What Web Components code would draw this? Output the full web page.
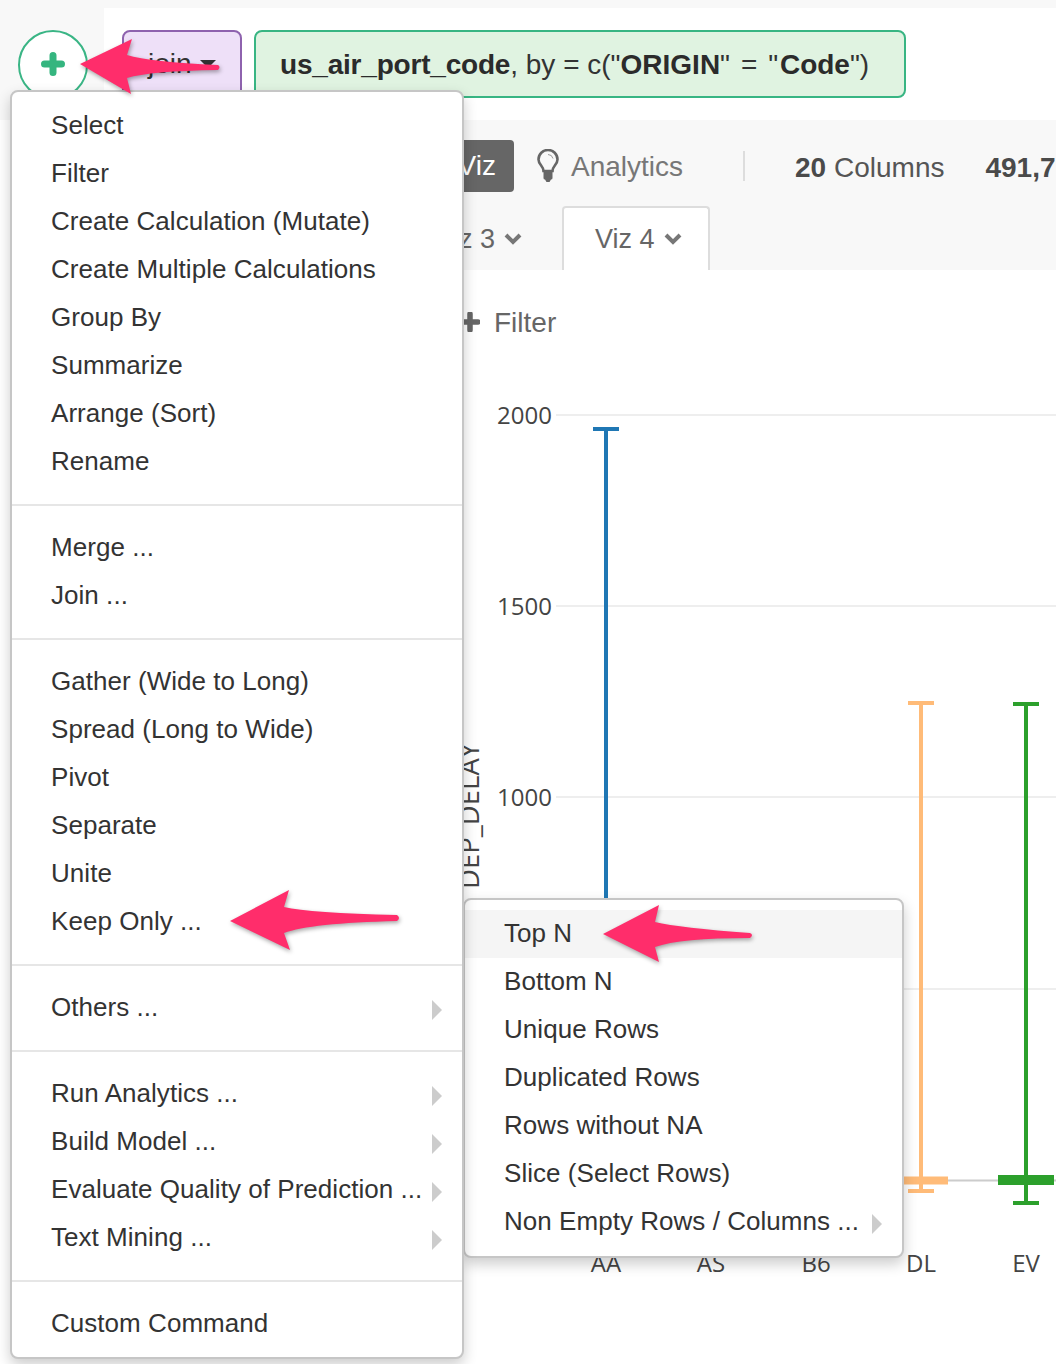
<!DOCTYPE html>
<html>
<head>
<meta charset="utf-8">
<title>Exploratory</title>
<style>
  html, body { margin: 0; padding: 0; background: #fff; }
  body { font-family: "Liberation Sans", Arial, sans-serif; color: #333; overflow: hidden; }
</style>
</head>
<body>
<app-page>
  <step-bar slot="steps"></step-bar>
  <view-toolbar slot="toolbar"></view-toolbar>
  <filter-row slot="filter"></filter-row>
  <box-chart slot="chart"></box-chart>

  <drop-menu slot="overlay" class="main">
    <menu-item>Select</menu-item>
    <menu-item>Filter</menu-item>
    <menu-item>Create Calculation (Mutate)</menu-item>
    <menu-item>Create Multiple Calculations</menu-item>
    <menu-item>Group By</menu-item>
    <menu-item>Summarize</menu-item>
    <menu-item>Arrange (Sort)</menu-item>
    <menu-item>Rename</menu-item>
    <menu-divider></menu-divider>
    <menu-item>Merge ...</menu-item>
    <menu-item>Join ...</menu-item>
    <menu-divider></menu-divider>
    <menu-item>Gather (Wide to Long)</menu-item>
    <menu-item>Spread (Long to Wide)</menu-item>
    <menu-item>Pivot</menu-item>
    <menu-item>Separate</menu-item>
    <menu-item>Unite</menu-item>
    <menu-item>Keep Only ...</menu-item>
    <menu-divider></menu-divider>
    <menu-item sub>Others ...</menu-item>
    <menu-divider></menu-divider>
    <menu-item sub>Run Analytics ...</menu-item>
    <menu-item sub>Build Model ...</menu-item>
    <menu-item sub>Evaluate Quality of Prediction ...</menu-item>
    <menu-item sub>Text Mining ...</menu-item>
    <menu-divider></menu-divider>
    <menu-item>Custom Command</menu-item>
  </drop-menu>

  <drop-menu slot="overlay" class="sub">
    <menu-item active>Top N</menu-item>
    <menu-item>Bottom N</menu-item>
    <menu-item>Unique Rows</menu-item>
    <menu-item>Duplicated Rows</menu-item>
    <menu-item>Rows without NA</menu-item>
    <menu-item>Slice (Select Rows)</menu-item>
    <menu-item sub>Non Empty Rows / Columns ...</menu-item>
  </drop-menu>

  <pink-arrows slot="overlay"></pink-arrows>
</app-page>

<script>
class AppPage extends HTMLElement {
  constructor() {
    super();
    this.shadowDOM = this.attachShadow({ mode: "open" });
  }
  connectedCallback() {
    this.shadowDOM.innerHTML = `
<style>
:host {
  display: grid;
  grid-template-columns: 104px 1fr;
  position: relative;
  width: 1056px;
  height: 1364px;
  overflow: hidden;
  background: #fff;
}
.rail {
  background: #f8f8f8;
  height: 120px;
  padding: 30px 0 0 18px;
  box-sizing: border-box;
}
.plus {
  width: 70px;
  height: 70px;
  box-sizing: border-box;
  border: 2px solid #3ab585;
  border-radius: 50%;
  background: #fff;
  display: flex;
  align-items: center;
  justify-content: center;
}
.plus svg { margin-bottom: 3px; }
.main {
  min-width: 0;
  display: flex;
  flex-direction: column;
}
.top-strip { height: 8px; background: #f8f8f8; }
</style>
<div class="rail">
  <div class="plus">
    <svg width="24" height="24" viewBox="0 0 24 24"><path d="M12 3.500v17M3.500 12h17" stroke="#35b57f" stroke-width="7" stroke-linecap="round" fill="none"/></svg>
  </div>
</div>
<div class="main">
  <div class="top-strip"></div>
  <slot name="steps"></slot>
  <slot name="toolbar"></slot>
  <slot name="filter"></slot>
  <slot name="chart"></slot>
</div>
<slot name="overlay"></slot>`;
  }
}

class StepBar extends HTMLElement {
  constructor() {
    super();
    this.shadowDOM = this.attachShadow({ mode: "open" });
  }
  connectedCallback() {
    this.shadowDOM.innerHTML = `
<style>
:host {
  display: flex;
  height: 112px;
  box-sizing: border-box;
  padding: 22px 0 0 18px;
  gap: 12px;
  background: #fff;
  font-size: 28px;
  color: #333;
}
.join, .code {
  height: 68px;
  box-sizing: border-box;
  display: flex;
  align-items: center;
  border-radius: 8px;
  border-style: solid;
  border-width: 2px;
}
.join {
  width: 120px;
  padding-left: 24px;
  gap: 8px;
  background: #eee0f8;
  border-color: #8e62ae;
}
.caret {
  width: 0;
  height: 0;
  border-left: 8px solid transparent;
  border-right: 8px solid transparent;
  border-top: 8px solid #333;
}
.code {
  width: 652px;
  padding: 2px 0 0 24px;
  background: #e0f3e1;
  border-color: #38b583;
  white-space: pre;
}
b { color: #2b2b2b; }
.first { letter-spacing: -.2px; }
.eq { letter-spacing: 1.6px; }
</style>
<div class="join"><span>join</span><span class="caret"></span></div>
<div class="code"><span><b class="first">us_air_port_code</b>, by = c("<b>ORIGIN</b><span class="eq">" = "</span><b>Code</b>")</span></div>`;
  }
}

class ViewToolbar extends HTMLElement {
  constructor() {
    super();
    this.shadowDOM = this.attachShadow({ mode: "open" });
  }
  connectedCallback() {
    const chevron = `<svg class="chev" width="18" height="14" viewBox="0 0 18 14"><path d="M2 3l7 7 7-7" stroke="#777" stroke-width="4" fill="none"/></svg>`;
    this.shadowDOM.innerHTML = `
<style>
:host {
  display: flex;
  flex-direction: column;
  height: 150px;
  box-sizing: border-box;
  padding-top: 20px;
  background: #f8f8f8;
  overflow: hidden;
  font-size: 28px;
  white-space: nowrap;
}
.row1 {
  display: flex;
  align-items: center;
  height: 52px;
  padding-left: 310px;
  color: #777;
}
.viz {
  height: 52px;
  width: 100px;
  flex: none;
  box-sizing: border-box;
  padding-right: 18px;
  display: flex;
  align-items: center;
  justify-content: flex-end;
  background: #666;
  color: #fff;
  border-radius: 4px;
  margin-right: 22px;
}
.bulb { margin-right: 11px; flex: none; }
.label { margin-top: 2px; }
.sep { width: 2px; height: 30px; background: #ddd; margin: 0 50px 0 60px; flex: none; }
.count { color: #555; margin-right: 41px; margin-top: 3px; flex: none; }
.count b { color: #4a4a4a; }
.row2 {
  display: flex;
  align-items: flex-end;
  height: 64px;
  margin-top: 14px;
  padding-left: 298px;
  gap: 12px;
  color: #666;
  font-size: 27px;
}
.tab {
  height: 64px;
  box-sizing: border-box;
  display: flex;
  align-items: center;
  gap: 9px;
  padding: 0 26px 0 31px;
  border: 2px solid transparent;
  border-bottom: 0;
  border-radius: 4px 4px 0 0;
}
.tab.on { background: #fff; border-color: #ddd; width: 148px; }
.tab.off { width: 148px; justify-content: flex-end; }
</style>
<div class="row1">
  <div class="viz">Viz</div>
  <svg class="bulb" width="24" height="34" viewBox="0 0 24 34">
    <path d="M7.500 22C7.500 17 2.500 15.500 2.500 10.500A9.500 9.500 0 1 1 21.500 10.500C21.500 15.500 16.500 17 16.500 22Z" fill="none" stroke="#666" stroke-width="2.600"/>
    <path d="M7.500 22.500h9V29q0 1.500-1.500 1.500L13.500 33h-3L9 30.500q-1.500 0-1.500-1.500Z" fill="#666"/>
    <path d="M12 5.500q4 0 5 4" fill="none" stroke="#999" stroke-width="1"/>
  </svg>
  <span class="label">Analytics</span>
  <span class="sep"></span>
  <span class="count"><b>20</b> Columns</span>
  <span class="count"><b>491,7</b></span>
</div>
<div class="row2">
  <div class="tab off"><span>Viz 3</span>${chevron}</div>
  <div class="tab on"><span>Viz 4</span>${chevron}</div>
</div>`;
  }
}

class FilterRow extends HTMLElement {
  constructor() {
    super();
    this.shadowDOM = this.attachShadow({ mode: "open" });
  }
  connectedCallback() {
    this.shadowDOM.innerHTML = `
<style>
:host {
  display: flex;
  align-items: center;
  gap: 14px;
  height: 56px;
  margin-top: 24px;
  padding-left: 356px;
  font-size: 28px;
  color: #666;
  background: #fff;
}
span { margin-top: 2px; }
</style>
<svg width="20" height="20" viewBox="0 0 20 20"><path d="M10 2v16M2 10h16" stroke="#666" stroke-width="5.500" stroke-linecap="round" fill="none"/></svg>
<span>Filter</span>`;
  }
}

class BoxChart extends HTMLElement {
  constructor() {
    super();
    this.shadowDOM = this.attachShadow({ mode: "open" });
  }
  connectedCallback() {
    const grid = [[2000, 415], [1500, 606], [1000, 797]]
      .map(([v, y]) => `<line x1="556" x2="1056" y1="${y}" y2="${y}" stroke="#eee" stroke-width="2"/>
        <text x="552" y="${y + 9}" text-anchor="end">${v}</text>`)
      .join("");
    const labels = [["AA", 606], ["AS", 711], ["B6", 816], ["DL", 921], ["EV", 1026]]
      .map(([t, x]) => `<text x="${x}" y="1272" text-anchor="middle">${t}</text>`)
      .join("");
    this.shadowDOM.innerHTML = `
<style>
:host { display: block; height: 1014px; }
svg { display: block; }
text { font-family: "Open Sans", sans-serif; font-size: 24px; fill: #444; }
</style>
<svg width="952" height="1014" viewBox="104 350 952 1014">
  ${grid}
  <line x1="556" x2="1056" y1="989" y2="989" stroke="#eee" stroke-width="2"/>
  <line x1="556" x2="1056" y1="1180.500" y2="1180.500" stroke="#ccc" stroke-width="2"/>
  <text transform="translate(479 889) rotate(-90)" style="font-size:27.500px">DEP_DELAY</text>
  ${labels}

  <g stroke="#1f77b4" stroke-width="4" fill="none">
    <path d="M606 429V1180M593 429H619"/>
  </g>
  <g stroke="#ffbb78" stroke-width="4" fill="none">
    <path d="M921 703V1191M908 703H934M908 1191H934"/>
    <path d="M895 1180.500H948" stroke-width="8"/>
  </g>
  <g stroke="#2ca02c" stroke-width="4" fill="none">
    <path d="M1026 704V1203M1013 704H1039M1013 1203H1039"/>
    <path d="M998 1180H1054" stroke-width="10"/>
  </g>
</svg>`;
  }
}

class DropMenu extends HTMLElement {
  constructor() {
    super();
    this.shadowDOM = this.attachShadow({ mode: "open" });
  }
  connectedCallback() {
    const sub = this.classList.contains("sub");
    this.shadowDOM.innerHTML = `
<style>
:host {
  display: block;
  position: absolute;
  box-sizing: border-box;
  left: ${sub ? 463 : 10}px;
  top: ${sub ? 898 : 90}px;
  width: ${sub ? 441 : 454}px;
  padding: ${sub ? "10px" : "9px"} 0 10px;
  z-index: ${sub ? 2 : 3};
  background: #fff;
  border: 2px solid #c6c6c6;
  border-radius: 8px;
  box-shadow: 0 6px 14px rgba(0, 0, 0, .2);
  --item-pad: 39px;
  --item-end: 20px;
  --item-drop: ${sub ? "2px" : "0px"};
}
</style>
<slot></slot>`;
  }
}

class MenuItem extends HTMLElement {
  constructor() {
    super();
    this.shadowDOM = this.attachShadow({ mode: "open" });
  }
  connectedCallback() {
    this.shadowDOM.innerHTML = `
<style>
:host {
  display: flex;
  align-items: center;
  justify-content: space-between;
  height: 48px;
  box-sizing: border-box;
  padding: 0 var(--item-end) var(--item-drop) var(--item-pad);
  font-size: 26px;
  letter-spacing: .04px;
  color: #333;
  white-space: nowrap;
}
:host([active]) { background: #f5f5f5; }
.arrow {
  flex: none;
  width: 0;
  height: 0;
  margin-top: 6px;
  border-left: 10px solid #ccc;
  border-top: 10px solid transparent;
  border-bottom: 10px solid transparent;
}
</style>
<span><slot></slot></span>
${this.hasAttribute("sub") ? '<span class="arrow"></span>' : ""}`;
  }
}

class MenuDivider extends HTMLElement {
  constructor() {
    super();
    this.attachShadow({ mode: "open" }).innerHTML = `
<style>
:host { display: block; height: 2px; margin: 19px 0 17px; background: #e6e6e6; }
</style>`;
  }
}

class PinkArrows extends HTMLElement {
  constructor() {
    super();
    this.shadowDOM = this.attachShadow({ mode: "open" });
  }
  connectedCallback() {
    this.shadowDOM.innerHTML = `
<style>
:host { position: absolute; left: 0; top: 0; width: 1056px; height: 1364px; z-index: 5; pointer-events: none; }
svg { display: block; overflow: visible; }
path { fill: #ff2d6b; filter: drop-shadow(1px 2px 2px rgba(0, 0, 0, .35)); }
</style>
<svg width="1056" height="1364" viewBox="0 0 1056 1364">
  <path d="M80 64L132 39L127 55Q150 62 218 65Q221 67 218 70Q150 71 127 78L131 94Z"/>
  <path d="M230 921L289 890L284 907Q310 913 397 915Q401 918 397 921Q310 923 284 933L290 950Z"/>
  <path d="M603 934L659 905L655 922Q680 928 750 933Q754 935 750 938Q680 938 655 947L659 962Z"/>
</svg>`;
  }
}

customElements.define("app-page", AppPage);
customElements.define("step-bar", StepBar);
customElements.define("view-toolbar", ViewToolbar);
customElements.define("filter-row", FilterRow);
customElements.define("box-chart", BoxChart);
customElements.define("drop-menu", DropMenu);
customElements.define("menu-item", MenuItem);
customElements.define("menu-divider", MenuDivider);
customElements.define("pink-arrows", PinkArrows);
</script>
</body>
</html>
